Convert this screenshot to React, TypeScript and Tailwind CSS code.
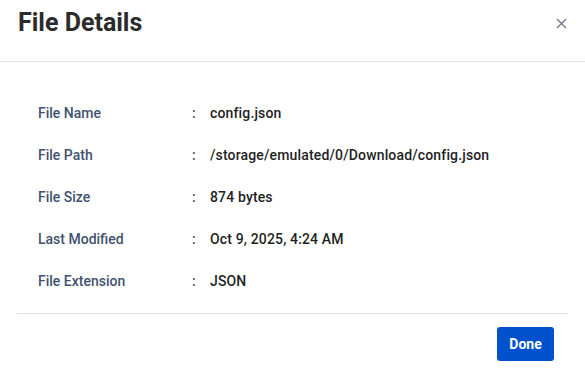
import React from 'react';

const rows: [string, string][] = [
  ['File Name', 'config.json'],
  ['File Path', '/storage/emulated/0/Download/config.json'],
  ['File Size', '874 bytes'],
  ['Last Modified', 'Oct 9, 2025, 4:24 AM'],
  ['File Extension', 'JSON'],
];

export default function App() {
  return (
    <div className="w-[585px] h-[371px] bg-white font-['Roboto',sans-serif] flex flex-col">
      <div className="h-[62px] shrink-0 flex items-start justify-between pl-[18px] pr-[16px] pt-[7px] border-b border-[#dfe1e6]">
        <h1 className="text-[25px] leading-[32px] font-bold text-[#2b2b2b]">File Details</h1>
        <button className="mt-[8px] w-[16px] h-[16px] flex items-center justify-center text-[#6b778c]">
          <svg width="11" height="11" viewBox="0 0 11 11" fill="none" stroke="currentColor" strokeWidth="1.3">
            <path d="M1 1L10 10M10 1L1 10" />
          </svg>
        </button>
      </div>

      <div className="px-[17px]">
        <div className="pt-[30px] pb-[11px] border-b border-[#dfe1e6]">
          {rows.map(([label, value]) => (
            <div key={label} className="h-[42px] flex items-center pl-[21px] text-[14px]">
              <span className="w-[154px] font-medium text-[#42526e]">{label}</span>
              <span className="w-[18px] text-[#42526e] font-medium">:</span>
              <span className="text-[#1f1f1f] font-medium tracking-[0.15px]">{value}</span>
            </div>
          ))}
        </div>
      </div>

      <div className="flex justify-end pr-[31px] pt-[13px]">
        <button className="w-[57px] h-[34px] rounded-[3px] bg-[#0052cc] text-white text-[14px] font-bold">
          Done
        </button>
      </div>
    </div>
  );
}
